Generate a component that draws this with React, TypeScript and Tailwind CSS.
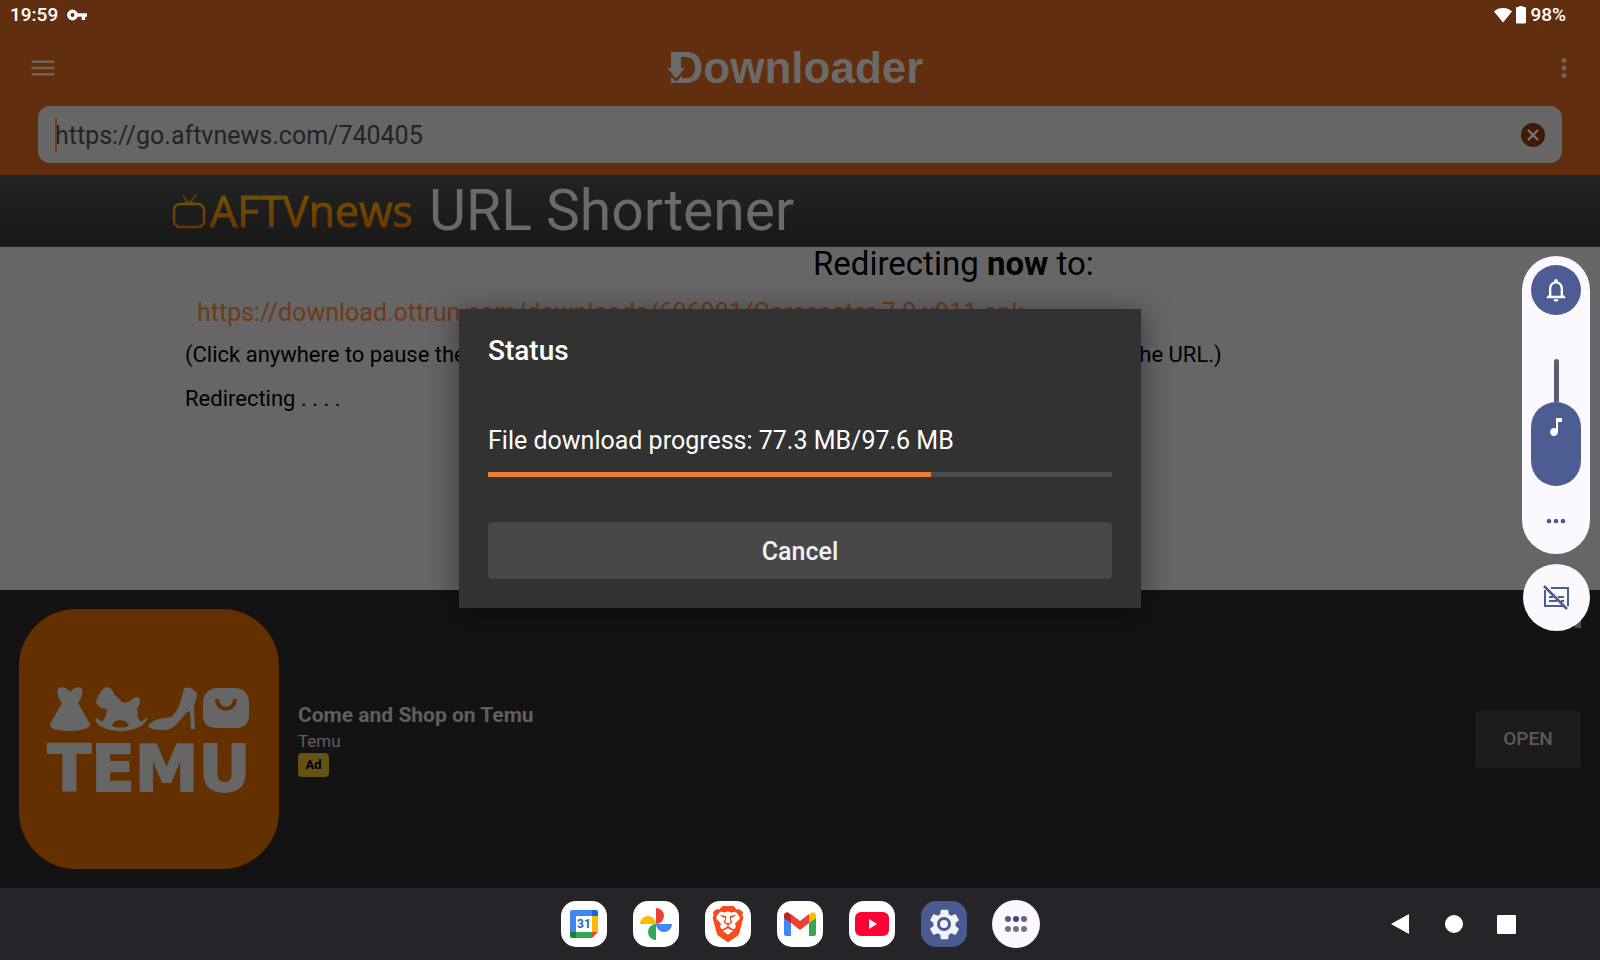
import { useState } from "react";
import type { ReactNode } from "react";
import {
  MdMenu,
  MdMoreHoriz,
  MdMoreVert,
  MdMusicNote,
  MdNotificationsNone,
  MdSettings,
} from "react-icons/md";
import { SiBrave } from "react-icons/si";

const DOWNLOADED_MB = 77.3;
const TOTAL_MB = 97.6;
const BAR_PERCENT = 71;

export default function App() {
  return (
    <div className="relative min-h-screen flex flex-col bg-[#666666] font-[Roboto,sans-serif] overflow-hidden">
      <AppHeader />
      <ShortenerPage />
      <AdBanner />
      <Taskbar />
      <StatusDialog />
      <VolumePanel />
    </div>
  );
}

function AppHeader() {
  const [url, setUrl] = useState("https://go.aftvnews.com/740405");

  return (
    <header className="bg-[#612e0f] pb-3">
      <div className="flex items-center justify-between h-[30px] pl-[10px] pr-[34px] text-white text-[19px] font-medium">
        <div className="flex items-center gap-[9px]">
          <span>19:59</span>
          <svg width="20" height="12" viewBox="0 0 20 12" fill="none" stroke="currentColor">
            <circle cx="5.500" cy="6" r="3.700" strokeWidth="3.400" />
            <path d="M9 6h11" strokeWidth="3.400" />
            <path d="M16.500 6v5" strokeWidth="3.400" />
          </svg>
        </div>
        <div className="flex items-center gap-1">
          <svg width="18" height="16" viewBox="0 0 18 16" fill="currentColor">
            <path d="M9 15.500 0 4.400C2.400 2.200 5.500 1 9 1s6.600 1.200 9 3.400z" />
          </svg>
          <svg width="10" height="18" viewBox="0 0 10 18" fill="currentColor">
            <path d="M3 0h4v1h2a1 1 0 0 1 1 1v14.500a1 1 0 0 1-1 1H1a1 1 0 0 1-1-1V2a1 1 0 0 1 1-1h2z" />
          </svg>
          <span>98%</span>
        </div>
      </div>

      <div className="flex items-center justify-between h-[76px] pl-7 pr-[21px]">
        <button aria-label="Menu" className="text-[#75635a]">
          <MdMenu size={30} />
        </button>
        <h1 className="relative pr-3 text-[44px] leading-none font-bold text-[#6b6a69] font-['Liberation_Sans',sans-serif]">
          Downloader
          <svg className="absolute -left-[6px] top-1" width="24" height="36" viewBox="0 0 24 36">
            <path d="M5 25h11v8H5z" fill="#6b6a69" />
            <path d="M1 21l9 9 9-9" fill="none" stroke="#612e0f" strokeWidth="2" />
            <path d="M5 2h10v16h4l-9 10L1 18h4z" fill="#6b6a69" />
          </svg>
        </h1>
        <button aria-label="More options" className="text-[#75635a]">
          <MdMoreVert size={30} />
        </button>
      </div>

      <div className="relative mx-[38px] h-[57px] flex items-center bg-[#666666] rounded-xl pl-[17px] pr-[17px]">
        <input
          type="text"
          aria-label="URL"
          value={url}
          onChange={(e) => setUrl(e.target.value)}
          className="flex-1 pt-[2px] bg-transparent outline-none text-[25px] text-[#232323]"
        />
        <span className="absolute left-[17px] top-3 w-[2px] h-[34px] bg-[#7a3a12]" />
        <button
          aria-label="Clear"
          onClick={() => setUrl("")}
          className="w-6 h-6 rounded-full bg-[#3f1a04] text-[#777777] flex items-center justify-center"
        >
          <svg width="12" height="12" viewBox="0 0 12 12" stroke="currentColor" strokeWidth="2.200">
            <path d="M1 1l10 10M11 1L1 11" />
          </svg>
        </button>
      </div>
    </header>
  );
}

function ShortenerPage() {
  return (
    <main className="flex-1 flex flex-col text-black">
      <div className="h-[72px] flex items-center pl-[172px] bg-linear-to-b from-[#232323] to-[#181818] border-b border-[#222222]">
        <svg width="34" height="38" viewBox="0 0 34 38" fill="none" strokeLinecap="round">
          <defs>
            <linearGradient id="tv" x1="0" y1="0" x2="0" y2="1">
              <stop offset="0" stopColor="#6b5000" />
              <stop offset="1" stopColor="#6b3500" />
            </linearGradient>
          </defs>
          <rect x="2" y="12" width="30" height="23" rx="6" stroke="url(#tv)" strokeWidth="2.500" />
          <path d="M11 4l5 6M24 3l-6 7M13 10h8" stroke="#5f4600" strokeWidth="1.500" />
        </svg>
        <span className="ml-1 text-[43px] leading-none font-['Open_Sans',sans-serif] bg-linear-to-b from-[#6e5600] to-[#6e3200] bg-clip-text text-transparent [-webkit-text-stroke:1px_transparent]">
          AFTVnews
        </span>
        <span className="ml-4 text-[57px] leading-none text-[#6a6a6a]">URL Shortener</span>
      </div>

      <div className="pl-[185px]">
        <p className="ml-[628px] text-[33px] leading-[34px]">
          Redirecting <b>now</b> to:
        </p>
        <a
          href="https://download.ottrun.com/downloads/696981/Corecaster-7.0.v911.apk"
          className="block mt-3 ml-3 text-[25px] leading-10 text-[#6f3a18] whitespace-nowrap"
        >
          https://download.ottrun.com/downloads/696981/Corecaster-7.0.v911.apk
        </a>
        <p className="mt-[2px] text-[22px] leading-10 whitespace-nowrap">
          (Click anywhere to pause the redirection for a few seconds if you need some more time to review the URL.)
        </p>
        <p className="mt-1 text-[22px] leading-10">Redirecting . . . .</p>
      </div>
    </main>
  );
}

function AdBanner() {
  return (
    <section className="relative flex items-center bg-[#131313] py-[19px] px-[19px]">
      <TemuLogo />
      <div className="ml-[19px] flex-1 text-[#5f5f5f]">
        <h2 className="text-[21px] leading-7 font-bold">Come and Shop on Temu</h2>
        <p className="text-[17px] leading-6">Temu</p>
        <span className="block w-[31px] h-6 rounded bg-[#665214] text-black text-[13px] leading-6 font-bold text-center">
          Ad
        </span>
      </div>
      <button className="w-[106px] h-[58px] rounded-sm bg-[#1c1c1c] text-[#5b5b5b] text-[19px] font-medium shadow">
        OPEN
      </button>
      <span className="absolute right-[19px] top-[30px] w-[6px] h-2 bg-[#4f4f4f]" />
    </section>
  );
}

function TemuLogo() {
  return (
    <svg width="260" height="260" viewBox="0 0 260 260" role="img" aria-label="Temu">
      <rect width="260" height="260" rx="57" fill="#643000" />
      <g fill="#666666">
        {/* dress */}
        <path d="M39 79c4-2 9 0 12 4 3-4 8-6 12-4 1 5 0 10-4 15l12 21c1 4-9 7-20 7s-21-2-20-7l12-21c-4-5-5-10-4-15z" />
        {/* rocking horse */}
        <path d="M77 93c2-7 6-13 10-15 4 0 7 3 8 7l8 8c4 1 8 0 10-3 3-3 8-3 8 2 0 4-1 6-3 7l1 10 3 4 6-5c1 1-1 6-6 9-12 7-31 7-42-1-3-2-4-5-3-7 2 0 3 2 6 4 3-3 4-7 5-13-5 0-10-3-11-7z" />
        <path d="M93 117c2-8 14-8 17 0-5 2-12 2-17 0z" fill="#643000" />
        {/* shoe */}
        <path d="M165 80c2-3 9-1 13 4 0 6-2 9-3 13l1 23h-4l-1-18c-6 1-10 13-20 18-7 2-17 1-22-2 3-7 12-9 23-10 9-7 10-19 13-28z" />
        {/* bag */}
        <path d="M199 79h16c10 0 15 6 15 15v12c0 9-5 13-14 13h-18c-9 0-14-4-14-13V94c0-9 6-15 15-15z" />
      </g>
      <path d="M198 90c0 13 18 13 18 0" fill="none" stroke="#643000" strokeWidth="4" />
      <text
        x="130"
        y="182"
        textAnchor="middle"
        fill="#666666"
        stroke="#666666"
        strokeWidth="2"
        strokeLinejoin="round"
        className="font-['DejaVu_Sans',sans-serif] font-bold text-[64px]"
      >
        TEMU
      </text>
    </svg>
  );
}

function StatusDialog() {
  return (
    <div className="absolute inset-x-0 top-[29px] bottom-[72px] flex items-center justify-center">
      <div
        role="dialog"
        aria-labelledby="status-title"
        className="w-[682px] p-[29px] pt-6 bg-[#323232] text-white shadow-[0_6px_28px_4px_rgba(0,0,0,0.35)]"
      >
        <h2 id="status-title" className="text-[28px] leading-9 font-medium">
          Status
        </h2>
        <p className="mt-14 text-[25px] leading-8">
          File download progress: {DOWNLOADED_MB} MB/{TOTAL_MB} MB
        </p>
        <div
          role="progressbar"
          aria-valuenow={DOWNLOADED_MB}
          aria-valuemax={TOTAL_MB}
          className="mt-[15px] h-[5px] bg-[#4b4b4b]"
        >
          <div className="h-full bg-[#ee7d30]" style={{ width: `${BAR_PERCENT}%` }} />
        </div>
        <button className="block mt-[45px] w-full h-[57px] pt-[3px] rounded-sm bg-[#484848] text-[25px] font-medium text-[#f0f0f0]">
          Cancel
        </button>
      </div>
    </div>
  );
}

function VolumePanel() {
  return (
    <aside className="absolute right-[10px] top-[256px] flex flex-col items-center gap-[10px] text-[#4d5c92]">
      <div className="w-[68px] h-[298px] pt-[9px] flex flex-col items-center rounded-full bg-[#fbf8ff]">
        <button
          aria-label="Ring mode"
          className="w-[50px] h-[50px] rounded-full bg-[#4d5c92] text-white flex items-center justify-center"
        >
          <MdNotificationsNone size={28} />
        </button>
        <div className="mt-11 w-[5px] h-[43px] rounded-t-full bg-[#5b5d72]" />
        <button
          aria-label="Media volume"
          className="w-[50px] h-[84px] pt-[13px] flex justify-center rounded-full bg-[#4d5c92] text-white"
        >
          <MdMusicNote size={24} />
        </button>
        <button aria-label="More" className="mt-[21px]">
          <MdMoreHoriz size={28} />
        </button>
      </div>
      <button
        aria-label="Captions off"
        className="w-[67px] h-[67px] rounded-full bg-[#fbf8ff] flex items-center justify-center"
      >
        <svg width="28" height="28" viewBox="0 0 28 28" fill="none" stroke="currentColor" strokeWidth="2">
          <path d="M9 4h17v18M22 22H3V6" />
          <path d="M7 13h4M16 13h6M7 17h8M19 17h3" />
          <path d="M2 2l23 23" strokeWidth="2.500" />
        </svg>
      </button>
    </aside>
  );
}

function Taskbar() {
  return (
    <nav className="grid grid-cols-[1fr_auto_1fr] items-center h-[72px] bg-[#252428]">
      <div className="col-start-2 flex items-center gap-6">
        <DockIcon label="Calendar">
          <svg width="28" height="28" viewBox="0 0 28 28">
            <path d="M2 0h20v6H6v16H0V2a2 2 0 0 1 2-2z" fill="#4285f4" />
            <path d="M22 0h4a2 2 0 0 1 2 2v4h-6z" fill="#1967d2" />
            <path d="M22 6h6v16h-6z" fill="#fbbc04" />
            <path d="M6 22h16v6H6z" fill="#34a853" />
            <path d="M0 22h6v6H2a2 2 0 0 1-2-2z" fill="#188038" />
            <path d="M22 22h6l-6 6z" fill="#ea4335" />
            <text x="14" y="18" textAnchor="middle" fill="#1a66c8" className="text-[12px] font-bold">
              31
            </text>
          </svg>
        </DockIcon>
        <DockIcon label="Photos">
          <svg width="32" height="32" viewBox="0 0 32 32">
            <path d="M16 0a8 8 0 0 1 0 16z" fill="#ea4335" />
            <path d="M32 16a8 8 0 0 1-16 0z" fill="#4285f4" />
            <path d="M16 32a8 8 0 0 1 0-16z" fill="#34a853" />
            <path d="M0 16a8 8 0 0 1 16 0z" fill="#fbbc04" />
          </svg>
        </DockIcon>
        <DockIcon label="Brave">
          <SiBrave size={36} color="#fb4a1a" />
        </DockIcon>
        <DockIcon label="Gmail">
          <svg width="32" height="24" viewBox="0 0 32 24">
            <path d="M0 5l7 5v14H2a2 2 0 0 1-2-2z" fill="#4285f4" />
            <path d="M25 10l7-5v17a2 2 0 0 1-2 2h-5z" fill="#34a853" />
            <path d="M25 3l2-2c2-2 5 0 5 2v3l-7 5z" fill="#fbbc04" />
            <path d="M7 3L5 1C3-1 0 1 0 3v3l7 5z" fill="#c5221f" />
            <path d="M7 2l9 7 9-7v9l-9 7-9-7z" fill="#ea4335" />
          </svg>
        </DockIcon>
        <DockIcon label="YouTube">
          <svg width="34" height="24" viewBox="0 0 34 24">
            <rect width="34" height="24" rx="6" fill="#ff0033" />
            <path d="M14 7l8 5-8 5z" fill="#fff" />
          </svg>
        </DockIcon>
        <DockIcon label="Settings" className="bg-[#4a5a92] text-[#f1f3fb]">
          <span className="relative">
            <MdSettings size={37} />
            <span className="absolute inset-0 m-auto w-[14px] h-[14px] rounded-full bg-[#f1f3fb] border-[3px] border-[#4a5a92]" />
          </span>
        </DockIcon>
        <button
          aria-label="All apps"
          className="w-12 h-12 rounded-full bg-[#fbf8ff] flex items-center justify-center"
        >
          <svg width="24" height="16" viewBox="0 0 24 16">
            <circle cx="4" cy="3" r="3" fill="#4d5c92" />
            <circle cx="12" cy="3" r="3" fill="#3a4a86" />
            <circle cx="20" cy="3" r="3" fill="#7f5a80" />
            <circle cx="4" cy="13" r="3" fill="#777680" />
            <circle cx="12" cy="13" r="3" fill="#777680" />
            <circle cx="20" cy="13" r="3" fill="#777680" />
          </svg>
        </button>
      </div>
      <div className="flex items-center justify-end pr-[84px] text-white">
        <button aria-label="Back" className="mr-9">
          <svg width="18" height="20" viewBox="0 0 18 20" fill="currentColor">
            <path d="M18 0v20L0 10z" />
          </svg>
        </button>
        <button aria-label="Home" className="w-[18px] h-[18px] mr-[34px] rounded-full bg-white" />
        <button aria-label="Recent apps" className="w-[19px] h-[19px] rounded-[1px] bg-white" />
      </div>
    </nav>
  );
}

function DockIcon({
  label,
  className = "bg-white",
  children,
}: {
  label: string;
  className?: string;
  children: ReactNode;
}) {
  return (
    <button
      aria-label={label}
      className={`w-[46px] h-[46px] mx-px rounded-[15px] flex items-center justify-center ${className}`}
    >
      {children}
    </button>
  );
}
